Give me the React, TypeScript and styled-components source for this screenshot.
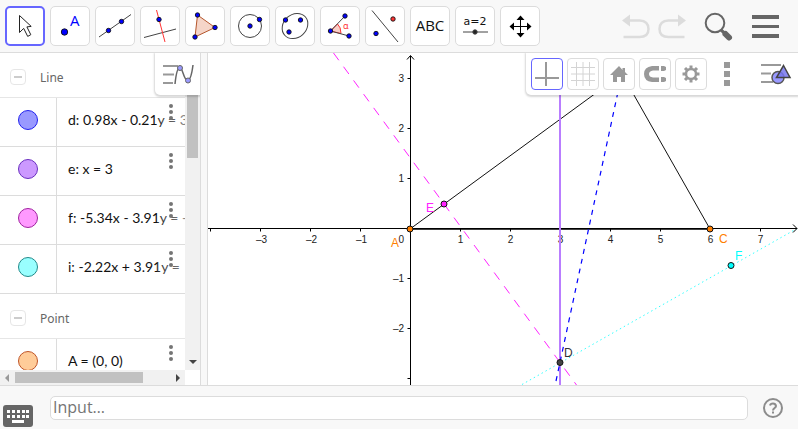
import React from "react";
import styled, { createGlobalStyle } from "styled-components";

const GlobalStyle = createGlobalStyle`
  * { box-sizing: border-box; }
  body { margin: 0; background: #fff; font-family: "Open Sans", "Noto Sans", sans-serif; }
  button { padding: 0; font: inherit; cursor: pointer; }
  ul { list-style: none; margin: 0; padding: 0; }
  svg { display: block; }
`;

const line = "#dcdcdc";

const Page = styled.div`
  display: flex;
  flex-direction: column;
  height: calc(100vh - 1px);
  margin-right: 2px;
  background: #f8f8f8;
`;

const Toolbar = styled.header`
  display: flex;
  align-items: center;
  justify-content: space-between;
  flex: none;
  height: 53px;
  padding: 0 19px 0 5px;
  border-bottom: 1px solid ${line};
`;

const Tools = styled.div`
  display: flex;
  gap: 5px;
`;

const ToolButton = styled.button<{ $active?: boolean }>`
  width: 40px;
  height: 40px;
  border: ${(p) => (p.$active ? "2px solid #6666ff" : `1px solid ${line}`)};
  border-radius: 5px;
  background: #fff;
  display: grid;
  place-items: center;
`;

const Actions = styled.div`
  display: flex;
  align-items: center;
`;

const History = styled.div`
  display: flex;
  gap: 8px;
`;

const PlainButton = styled.button`
  border: 0;
  background: none;
  display: grid;
  place-items: center;
`;

const Main = styled.main`
  display: flex;
  flex: 1;
  min-height: 0;
`;

const Sidebar = styled.aside`
  position: relative;
  display: grid;
  grid-template-columns: 1fr 15px;
  grid-template-rows: 1fr 15px;
  flex: 0 0 201px;
  min-height: 0;
  background: #fff;
  border-right: 1px solid ${line};
`;

const ListArea = styled.div`
  overflow: hidden;
  min-height: 0;
`;

const GroupHeader = styled.div`
  display: flex;
  align-items: center;
  gap: 14px;
  height: 45px;
  padding: 4px 10px 0;
  border-bottom: 1px solid #e6e6e6;
  color: #666;
  font-family: "Noto Sans", sans-serif;
  font-size: 12px;
`;

const Collapse = styled.button`
  width: 16px;
  height: 16px;
  border: 1px solid #e6e6e6;
  border-radius: 4px;
  background: #fff;
  display: grid;
  place-items: center;
`;

const Item = styled.li`
  position: relative;
  display: flex;
  height: 49px;
  border-bottom: 1px solid ${line};
`;

const MarbleCell = styled.div`
  flex: none;
  width: 57px;
  padding: 12px 18px;
  border-right: 1px solid ${line};
`;

const Marble = styled.button<{ $fill: string; $edge: string }>`
  display: block;
  width: 20px;
  height: 20px;
  border: 1px solid ${(p) => p.$edge};
  border-radius: 50%;
  background: ${(p) => p.$fill};
`;

const Formula = styled.span`
  padding-left: 11px;
  font-family: Lato, sans-serif;
  font-size: 14px;
  line-height: 44px;
  white-space: nowrap;
  color: #111;
`;

const MoreButton = styled.button`
  position: absolute;
  top: 0;
  right: 0;
  width: 28px;
  height: 48px;
  padding-top: 5px;
  border: 0;
  background: linear-gradient(to right, rgba(255, 255, 255, 0.1), rgba(255, 255, 255, 0.5));
  display: grid;
  justify-items: center;
  align-items: start;
`;

const VScroll = styled.div`
  display: flex;
  flex-direction: column;
  justify-content: space-between;
  align-items: center;
  padding: 42px 2px 4px;
  background: #f1f1f1;
`;

const VThumb = styled.div`
  width: 11px;
  height: 63px;
  background: #c1c1c1;
`;

const HScroll = styled.div`
  display: flex;
  align-items: center;
  padding: 2px 5px;
  background: #f1f1f1;
`;

const HThumb = styled.div`
  width: 128px;
  height: 11px;
  margin-left: 6px;
  margin-right: auto;
  background: #c1c1c1;
`;

const StyleTab = styled.button`
  position: absolute;
  top: 0;
  right: 0;
  width: 45px;
  height: 42px;
  border: 0;
  border-radius: 0 0 0 5px;
  background: #fff;
  box-shadow: 0 1px 2px 1px rgba(0, 0, 0, 0.16);
  clip-path: inset(0 0 -4px -4px);
  display: grid;
  place-items: center;
`;

const Splitter = styled.div`
  flex: 0 0 7px;
  border-right: 1px solid ${line};
`;

const GraphPane = styled.section`
  position: relative;
  flex: 1;
  min-width: 0;
  background: #fff;
  overflow: hidden;
`;

const Graph = styled.svg`
  width: 100%;
  height: 100%;
  font-family: "Liberation Sans", Arial, sans-serif;
`;

const StyleBar = styled.div`
  position: absolute;
  top: 0;
  right: 0;
  display: flex;
  align-items: center;
  gap: 4px;
  height: 42px;
  padding: 0 3px 0 5px;
  border-radius: 0 0 0 5px;
  background: #fff;
  box-shadow: 0 1px 2px 1px rgba(0, 0, 0, 0.16);
`;

const StyleButton = styled.button<{ $active?: boolean }>`
  width: 32px;
  height: 32px;
  border: 1px solid ${(p) => (p.$active ? "#6666ff" : line)};
  border-radius: 4px;
  background: #fff;
  display: grid;
  place-items: center;
`;

const Footer = styled.footer`
  display: flex;
  align-items: center;
  flex: none;
  height: 44px;
  padding: 0 14px 0 3px;
  border-top: 1px solid ${line};
`;

const KeyboardButton = styled(PlainButton)`
  align-self: flex-end;
  padding-bottom: 2px;
`;

const CommandInput = styled.input`
  flex: 1;
  min-width: 0;
  height: 24px;
  margin: 0 14px 0 17px;
  padding: 0 2px 2px;
  border: 1px solid ${line};
  border-radius: 5px;
  background: #fff;
  font-family: "Open Sans", "Noto Sans", sans-serif;
  font-size: 16px;
  color: #333;
  &::placeholder { color: #757575; opacity: 1; }
`;

const Dot = ({ x, y, c = "#0000ff", r = 2.2 }: { x: number; y: number; c?: string; r?: number }) => (
  <circle cx={x} cy={y} r={r} fill={c} stroke="#111" strokeWidth="0.9" />
);

const ToolIcon = ({ children }: { children: React.ReactNode }) => (
  <svg width="36" height="36" viewBox="2 2 36 36" fill="none" stroke="#444" strokeWidth="1">
    {children}
  </svg>
);

const tools: { name: string; icon: React.ReactNode }[] = [
  { name: "Move", icon: <path d="M14.5 9.5V26.500l4.2-4.1 4 8 3.1-1.700-3.900-7.800 4.300-.5Z" stroke="#222" /> },
  {
    name: "Point",
    icon: (
      <>
        <Dot x={14.5} y={26} r={3.2} />
        <text x="20" y="20" fontSize="15" fill="#0000ff" stroke="none" fontFamily="Open Sans, sans-serif">A</text>
      </>
    ),
  },
  { name: "Line", icon: <><path d="M4 31 36 8.500" /><Dot x={13.500} y={24.500} /><Dot x={26.500} y={15.500} /></> },
  {
    name: "Perpendicular line",
    icon: <><path d="M4 31.500 36 23" /><path d="M16.500 4 25 36" stroke="#f33" /><Dot x={19} y={13.500} /></>,
  },
  {
    name: "Polygon",
    icon: (
      <>
        <path d="M12.500 9 30 21.500 10 31Z" fill="#f5d5c8" stroke="#b5562c" />
        <Dot x={12.500} y={9} /><Dot x={30} y={21.500} /><Dot x={10} y={31} />
      </>
    ),
  },
  { name: "Circle with centre", icon: <><circle cx="20" cy="20" r="11.500" /><Dot x={20} y={20} /><Dot x={29.500} y={13.500} /></> },
  {
    name: "Ellipse",
    icon: (
      <>
        <ellipse cx="20" cy="20" rx="13.800" ry="11.500" transform="rotate(-42 20 20)" />
        <Dot x={10.500} y={14} /><Dot x={25.500} y={14} /><Dot x={14} y={26} />
      </>
    ),
  },
  {
    name: "Angle",
    icon: (
      <>
        <path d="M10.500 25 17.500 18Q21 21 21 27.500Z" fill="#f9cfc8" stroke="#f33" />
        <path d="M25 10 10.500 25 29 30" />
        <text x="23" y="23" fontSize="9" fill="#f33" stroke="none" fontFamily="Noto Sans, sans-serif">α</text>
        <Dot x={25} y={10} /><Dot x={10.500} y={25} /><Dot x={29} y={30} />
      </>
    ),
  },
  { name: "Reflect about line", icon: <><path d="M7 4.500 33 36" /><Dot x={28} y={13} c="#f33" /><Dot x={11} y={27.500} /></> },
  {
    name: "Text",
    icon: <text x="20" y="25" textAnchor="middle" fontSize="15" fill="#111" stroke="none" fontFamily="Open Sans, sans-serif">ABC</text>,
  },
  {
    name: "Slider",
    icon: (
      <>
        <text x="20" y="19" textAnchor="middle" fontSize="11" fill="#111" stroke="none" fontFamily="DejaVu Sans, sans-serif">a=2</text>
        <path d="M8 26H33" />
        <circle cx="20" cy="26" r="2.200" fill="#222" />
      </>
    ),
  },
  {
    name: "Move graphics view",
    icon: (
      <>
        <path d="M20.500 12v17M12 20.500h17" stroke="#000" />
        <path d="M20.500 9.500l4 4.500h-8ZM20.500 31.500l4-4.500h-8ZM9.500 20.500l4.500-4v8ZM31.500 20.500l-4.500-4v8Z" fill="#000" stroke="none" />
      </>
    ),
  },
];

const Undo = ({ flip }: { flip?: boolean }) => (
  <svg width="28" height="26" viewBox="0 0 28 26">
    <g transform={flip ? "matrix(-1 0 0 1 28 0)" : undefined}>
      <path d="M7 7.500H17.500Q26.500 8 26.500 16T17.500 24H1.500" fill="none" stroke="#dcdcdc" strokeWidth="2.500" />
      <path d="M0 7.500 8 1.500v12Z" fill="#dcdcdc" />
    </g>
  </svg>
);

const MoreDots = () => (
  <svg width="6" height="18" viewBox="0 0 6 18" fill="#757575">
    <circle cx="3" cy="3" r="2" /><circle cx="3" cy="9" r="2" /><circle cx="3" cy="15" r="2" />
  </svg>
);

type Entry = { text: string; fill: string; edge: string };

const lines: Entry[] = [
  { text: "d: 0.98x - 0.21y = 3", fill: "#9999ff", edge: "#2222ee" },
  { text: "e: x = 3", fill: "#cc99ff", edge: "#6a2fc0" },
  { text: "f: -5.34x - 3.91y = -", fill: "#ff99ff", edge: "#a022a0" },
  { text: "i: -2.22x + 3.91y =", fill: "#99ffff", edge: "#228a8a" },
];
const points: Entry[] = [{ text: "A = (0, 0)", fill: "#ffcc99", edge: "#c05528" }];

const Group = ({ title, items }: { title: string; items: Entry[] }) => (
  <section>
    <GroupHeader>
      <Collapse aria-label={`Collapse ${title}`}>
        <svg width="8" height="2"><rect width="8" height="2" fill="#ccc" /></svg>
      </Collapse>
      {title}
    </GroupHeader>
    <ul>
      {items.map((it) => (
        <Item key={it.text}>
          <MarbleCell><Marble $fill={it.fill} $edge={it.edge} aria-label={`Show or hide ${it.text[0]}`} /></MarbleCell>
          <Formula>{it.text}</Formula>
          <MoreButton aria-label="More"><MoreDots /></MoreButton>
        </Item>
      ))}
    </ul>
  </section>
);

const OX = 202.5;
const OY = 175.5;
const UNIT = 50;

const Construction = () => (
  <Graph viewBox="0 0 590 332" preserveAspectRatio="xMidYMid slice" role="img" aria-label="Graphics view">
    <path d="M314 331.500 589 175.500" fill="none" stroke="#33ffff" strokeDasharray="1.500 3" />
    <g stroke="#000" fill="none">
      <path d={`M0 ${OY}H589M${OX} 3V332`} />
      <path d="M585 171.500 589 175.500 585 179.500M199 6.500 202.500 2.500 206 6.500" />
      {[-4, -3, -2, -1, 1, 2, 3, 4, 5, 6, 7].map((n) => <path key={n} d={`M${OX + n * UNIT} ${OY}v3`} />)}
      {[-3, -2, -1, 1, 2, 3].map((n) => <path key={n} d={`M${OX} ${OY - n * UNIT}h-3`} />)}
    </g>
    <g fontSize="10" fill="#222">
      {[-3, -2, -1, 1, 2, 3, 4, 5, 6, 7].map((n) => (
        <text key={n} x={OX + n * UNIT + (n < 0 ? 1 : 0)} y="190" textAnchor="middle">{n < 0 ? `–${-n}` : n}</text>
      ))}
      <text x="196" y="190" textAnchor="end">0</text>
      {[-2, -1, 1, 2, 3].map((n) => (
        <text key={n} x="196" y={OY - n * UNIT + 3.5} textAnchor="end">{n < 0 ? `–${-n}` : n}</text>
      ))}
    </g>
    <g fill="none" strokeWidth="1">
      <path d="M202 176 414 21 502 176" stroke="#111" />
      <path d="M202 176H502" stroke="#000" strokeWidth="1.500" />
      <path d="M352 0V332" stroke="#b97dff" strokeWidth="2" />
      <path d="M125.500 0 368.500 332" stroke="#ff22ff" strokeDasharray="9 8" />
      <path d="M348 328 418.300 0" stroke="#0000ff" strokeWidth="1.200" strokeDasharray="5 5" />
    </g>
    <g stroke="#111">
      <circle cx="202" cy="176" r="3" fill="#ff7f00" />
      <circle cx="502" cy="176" r="3" fill="#ff7f00" />
      <circle cx="236" cy="151" r="3" fill="#ff22ff" />
      <circle cx="352" cy="309.500" r="3" fill="#444" />
      <circle cx="523" cy="212.500" r="3" fill="#00ffff" />
    </g>
    <g fontSize="12">
      <text x="183" y="194" fill="#ff7f00">A</text>
      <text x="511" y="190" fill="#ff7f00">C</text>
      <text x="218" y="159" fill="#ff22ff">E</text>
      <text x="356" y="304" fill="#333">D</text>
      <text x="527" y="207" fill="#00ffff">F</text>
    </g>
  </Graph>
);

export default function App() {
  return (
    <>
      <GlobalStyle />
      <Page>
        <Toolbar>
          <Tools>
            {tools.map((t, i) => (
              <ToolButton key={t.name} $active={i === 0} aria-label={t.name}>
                <ToolIcon>{t.icon}</ToolIcon>
              </ToolButton>
            ))}
          </Tools>
          <Actions>
            <History>
              <PlainButton aria-label="Undo"><Undo /></PlainButton>
              <PlainButton aria-label="Redo"><Undo flip /></PlainButton>
            </History>
            <PlainButton aria-label="Search">
              <svg width="66" height="32" viewBox="0 0 66 32" fill="none" stroke="#666">
                <circle cx="29" cy="13" r="9.300" strokeWidth="2" />
                <path d="M35 20 39 23.500" strokeWidth="3" />
                <path d="M39.500 24 43 27.500" strokeWidth="6" strokeLinecap="round" />
              </svg>
            </PlainButton>
            <PlainButton aria-label="Menu">
              <svg width="27" height="24" fill="#666">
                <rect y="1" width="27" height="4" /><rect y="11" width="27" height="3" /><rect y="20" width="27" height="4" />
              </svg>
            </PlainButton>
          </Actions>
        </Toolbar>
        <Main>
          <Sidebar>
            <ListArea>
              <Group title="Line" items={lines} />
              <Group title="Point" items={points} />
            </ListArea>
            <VScroll>
              <VThumb />
              <svg width="8" height="8"><path d="M0 2h8L4 6Z" fill="#444" /></svg>
            </VScroll>
            <HScroll>
              <svg width="4" height="8"><path d="M4 0v8L0 4Z" fill="#999" /></svg>
              <HThumb />
              <svg width="4" height="8"><path d="M0 0v8l4-4Z" fill="#444" /></svg>
            </HScroll>
            <StyleTab aria-label="Algebra style">
              <svg width="32" height="24" fill="none">
                <path d="M1 4H16M1 12.500H12M1 21H11" stroke="#999" strokeWidth="2" />
                <path d="M13 22C14 12 15.500 5.500 18 5.500S22 18.500 25.500 18.500C28 18.500 30 11 31 3" stroke="#666" strokeWidth="1.500" />
                <circle cx="18" cy="6" r="2.500" fill="#9999ff" stroke="#666" />
                <circle cx="26" cy="18.500" r="2.500" fill="#9999ff" stroke="#666" />
              </svg>
            </StyleTab>
          </Sidebar>
          <Splitter />
          <GraphPane>
            <Construction />
            <StyleBar>
              <StyleButton $active aria-label="Axes">
                <svg width="24" height="24"><path d="M11 0v24M0 16h24" stroke="#999" strokeWidth="2" /></svg>
              </StyleButton>
              <StyleButton aria-label="Grid">
                <svg width="24" height="24" stroke="#d4d4d4">
                  <path d="M5.500 0v24M12 0v24M18.500 0v24M0 5.500h24M0 12h24M0 18.500h24" />
                </svg>
              </StyleButton>
              <StyleButton aria-label="Standard view">
                <svg width="20" height="18" fill="#999"><path d="M10 1 1 10h3v7h4v-5h4v5h4v-7h3L16 7V3h-2.500v2Z" /></svg>
              </StyleButton>
              <StyleButton aria-label="Point capturing">
                <svg width="24" height="18" fill="#999">
                  <path d="M16 1H9Q1 2 1 9t8 8h7v-4.500h-6q-4-.500-4-3.500t4-3.500h6ZM18 1h3l2 1v3l-2 1h-3ZM18 12h3l2 1v3l-2 1h-3Z" />
                </svg>
              </StyleButton>
              <StyleButton aria-label="Settings">
                <svg width="20" height="20" viewBox="0 0 20 20" fill="none" stroke="#999">
                  <circle cx="10" cy="10" r="5" strokeWidth="2.500" />
                  {[0, 45, 90, 135, 180, 225, 270, 315].map((a) => (
                    <path key={a} d="M10 4.500V1.500" strokeWidth="3" transform={`rotate(${a} 10 10)`} />
                  ))}
                </svg>
              </StyleButton>
              <PlainButton aria-label="More options">
                <svg width="32" height="32" viewBox="0 0 32 32" fill="#999">
                  <rect x="13" y="4" width="6" height="6" /><rect x="13" y="13" width="6" height="6" /><rect x="13" y="22" width="6" height="6" />
                </svg>
              </PlainButton>
              <PlainButton aria-label="Style bar">
                <svg width="48" height="28" viewBox="0 0 48 28">
                  <path d="M14 5H34M14 13.500H24M14 22H26" stroke="#999" strokeWidth="2" />
                  <circle cx="31" cy="17.500" r="6" fill="#9999ff" stroke="#555" strokeWidth="1.500" />
                  <path d="M36.500 5.500 43 17.500H29.500Z" fill="#7777ee" fillOpacity="0.850" stroke="#444" strokeWidth="1.500" />
                </svg>
              </PlainButton>
            </StyleBar>
          </GraphPane>
        </Main>
        <Footer>
          <KeyboardButton aria-label="Keyboard">
            <svg width="30" height="22">
              <rect width="30" height="22" rx="3" fill="#666" />
              <g fill="#fff">
                {[4, 9, 14, 19, 23].map((x) => (
                  <React.Fragment key={x}><rect x={x} y="5" width="3" height="3" /><rect x={x} y="10" width="3" height="3" /></React.Fragment>
                ))}
                <rect x="9" y="15" width="12" height="3" />
              </g>
            </svg>
          </KeyboardButton>
          <CommandInput aria-label="Input" placeholder="Input…" />
          <PlainButton aria-label="Help">
            <svg width="22" height="22" fill="none" stroke="#8c8c8c" strokeWidth="2">
              <circle cx="11" cy="11" r="9" />
              <path d="M8 8.500Q8.500 6.500 11 6.500T14 9C14 11 11 11 11 13.500M11 14.500v2" />
            </svg>
          </PlainButton>
        </Footer>
      </Page>
    </>
  );
}
